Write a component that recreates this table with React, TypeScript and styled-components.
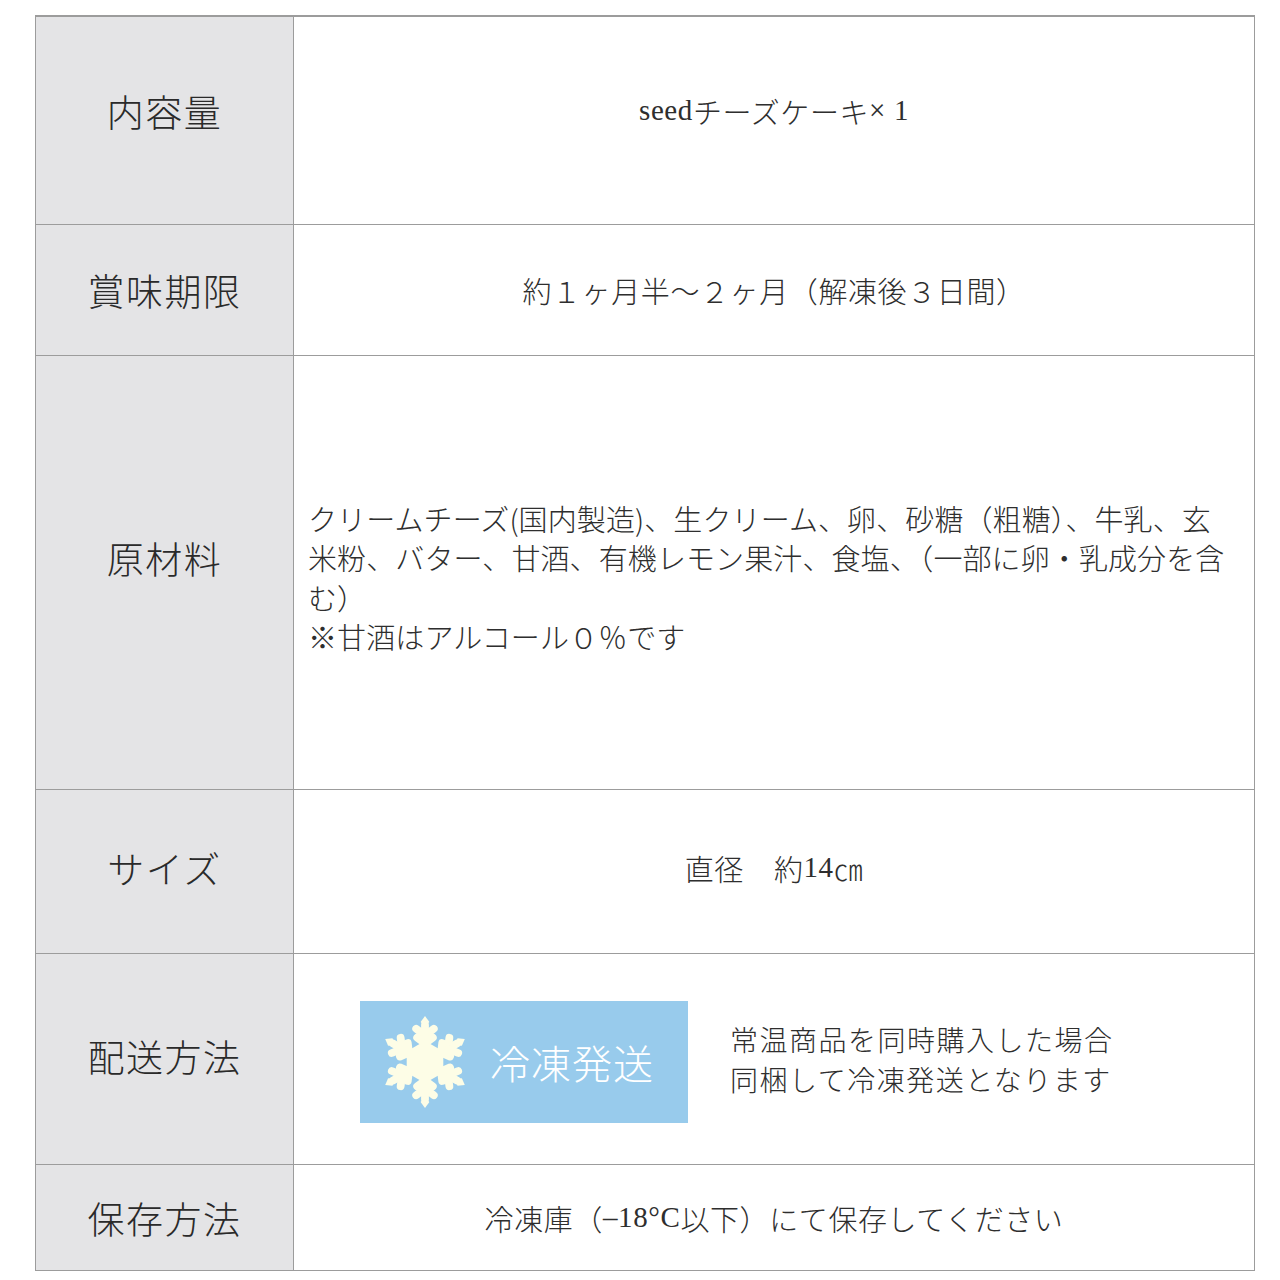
import React from "react";
import styled, { createGlobalStyle } from "styled-components";

const GlobalStyle = createGlobalStyle`
  html, body {
    margin: 0;
    padding: 0;
    background: #ffffff;
  }
  body {
    font-family: "Liberation Serif", "Noto Sans CJK JP", serif;
    color: #2b2b2b;
  }
`;

const Page = styled.div`
  padding: 15px 25px 10px 35px;
`;

const Table = styled.div`
  width: 1220px;
  box-sizing: border-box;
  border: 1px solid #9c9c9c;
  border-top-width: 2px;
`;

const Row = styled.div<{ $h: number; $lift?: number }>`
  display: grid;
  grid-template-columns: 258px 1fr;
  height: ${(p) => p.$h}px;
  box-sizing: border-box;
  & + & {
    border-top: 1px solid #9c9c9c;
  }
  & > * {
    padding-bottom: ${(p) => p.$lift ?? 0}px;
  }
`;

const Label = styled.div<{ $lift?: number }>`
  background: #e4e4e6;
  border-right: 1px solid #9c9c9c;
  display: flex;
  align-items: center;
  justify-content: center;
  font-family: "Noto Sans CJK JP", sans-serif;
  font-weight: 300;
  font-size: 37px;
  letter-spacing: 1.5px;
  color: #2a2a2a;
  box-sizing: border-box;
  ${(p) => (p.$lift ? `padding-bottom: ${p.$lift}px !important;` : "")}
`;

const Value = styled.div`
  display: flex;
  align-items: center;
  justify-content: center;
  font-size: 29px;
  font-weight: 300;
  letter-spacing: 0.6px;
  color: #2e2e2e;
  box-sizing: border-box;
`;

const Cjk = styled.span`
  font-family: "Noto Sans CJK JP", sans-serif;
  font-weight: 300;
`;

const Wide = styled.span<{ $gap: number }>`
  margin-left: ${(p) => p.$gap}px;
`;

const Lines = styled.div`
  width: 100%;
  align-self: center;
  padding: 0 0 0 14px;
  box-sizing: border-box;
  font-family: "Noto Sans CJK JP", sans-serif;
  font-weight: 300;
  font-size: 29px;
  letter-spacing: 0.1px;
  line-height: 39.5px;
  white-space: nowrap;
  margin-top: 10px;
`;

const Delivery = styled(Value)`
  justify-content: flex-start;
  padding-left: 66px;
  gap: 42px;
`;

const FrozenBadge = styled.div`
  width: 328px;
  height: 122px;
  margin-top: 6px;
  background: #98cbec;
  display: flex;
  align-items: center;
  padding-left: 22px;
  gap: 22px;
  box-sizing: border-box;
  font-family: "Noto Sans CJK JP", sans-serif;
  font-weight: 300;
  font-size: 40px;
  color: #ffffff;
  letter-spacing: 1px;
`;

const Note = styled.div`
  font-family: "Noto Sans CJK JP", sans-serif;
  font-weight: 300;
  font-size: 28px;
  line-height: 40px;
  letter-spacing: 1.5px;
  color: #2e2e2e;
`;

const hexagon = [30, 90, 150, 210, 270, 330]
  .map((a) => {
    const r = (a * Math.PI) / 180;
    return `${(17 * Math.cos(r)).toFixed(2)},${(17 * Math.sin(r)).toFixed(2)}`;
  })
  .join(" ");

const Snowflake = () => {
  const arm = (
    <g>
      <line x1="0" y1="0" x2="0" y2="-38" />
      <line x1="0" y1="-27" x2="-9" y2="-34" />
      <line x1="0" y1="-27" x2="9" y2="-34" />
      <line x1="0" y1="-19" x2="-8" y2="-25" />
      <line x1="0" y1="-19" x2="8" y2="-25" />
      <polygon points="0,-47 4.5,-41 0,-36 -4.5,-41" stroke="none" />
    </g>
  );
  return (
    <svg width="86" height="94" viewBox="-44 -48 88 96">
      <g stroke="#fdfde6" strokeWidth="8" strokeLinecap="round" strokeLinejoin="round" fill="#fdfde6">
        {[0, 60, 120, 180, 240, 300].map((a) => (
          <g key={a} transform={`rotate(${a})`}>
            {arm}
          </g>
        ))}
        <polygon points={hexagon} />
      </g>
    </svg>
  );
};

export default function App() {
  return (
    <Page>
      <GlobalStyle />
      <Table>
        <Row $h={207} $lift={20}>
          <Label>内容量</Label>
          <Value>
            <span>seed</span>
            <Cjk>チーズケーキ</Cjk>
            <span>× 1</span>
          </Value>
        </Row>
        <Row $h={131}>
          <Label>賞味期限</Label>
          <Value>
            <Cjk>約１ヶ月半〜２ヶ月（解凍後３日間）</Cjk>
          </Value>
        </Row>
        <Row $h={434}>
          <Label $lift={30}>原材料</Label>
          <Value>
            <Lines>
              クリームチーズ(国内製造)、生クリーム、卵、砂糖（粗糖）、牛乳、玄
              <br />
              米粉、バター、甘酒、有機レモン果汁、食塩、（一部に卵・乳成分を含
              <br />
              む）
              <br />
              ※甘酒はアルコール０％です
            </Lines>
          </Value>
        </Row>
        <Row $h={164} $lift={8}>
          <Label>サイズ</Label>
          <Value>
            <Cjk>直径</Cjk>
            <Wide $gap={30}>
              <Cjk>約</Cjk>
            </Wide>
            <span>14</span>
            <Cjk>㎝</Cjk>
          </Value>
        </Row>
        <Row $h={211}>
          <Label $lift={6}>配送方法</Label>
          <Delivery>
            <FrozenBadge>
              <Snowflake />
              <span>冷凍発送</span>
            </FrozenBadge>
            <Note>
              常温商品を同時購入した場合
              <br />
              同梱して冷凍発送となります
            </Note>
          </Delivery>
        </Row>
        <Row $h={106}>
          <Label>保存方法</Label>
          <Value>
            <Cjk>冷凍庫（</Cjk>
            <span>–18°C</span>
            <Cjk>以下）にて保存してください</Cjk>
          </Value>
        </Row>
      </Table>
    </Page>
  );
}
